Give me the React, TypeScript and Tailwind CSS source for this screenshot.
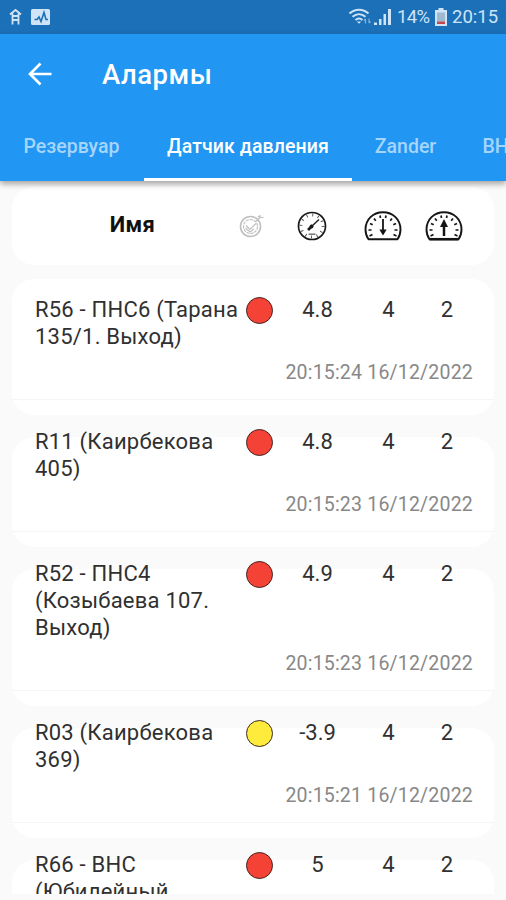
import React from 'react';
import clsx from 'clsx';

type Level = 'alarm' | 'warning';

interface Alarm {
    name: string[];
    level: Level;
    value: string;
    min: string;
    max: string;
    time: string;
}

const alarms: Alarm[] = [
    { name: ['R56 - ПНС6 (Тарана', '135/1. Выход)'], level: 'alarm', value: '4.8', min: '4', max: '2', time: '20:15:24 16/12/2022' },
    { name: ['R11 (Каирбекова', '405)'], level: 'alarm', value: '4.8', min: '4', max: '2', time: '20:15:23 16/12/2022' },
    { name: ['R52 - ПНС4', '(Козыбаева 107.', 'Выход)'], level: 'alarm', value: '4.9', min: '4', max: '2', time: '20:15:23 16/12/2022' },
    { name: ['R03 (Каирбекова', '369)'], level: 'warning', value: '-3.9', min: '4', max: '2', time: '20:15:21 16/12/2022' },
    { name: ['R66 - ВНС', '(Юбилейный'], level: 'alarm', value: '5', min: '4', max: '2', time: '' },
];

const StatusBar: React.FC = () => (
    <div className="flex h-[34px] shrink-0 items-center bg-[#1b70b7] pl-[9px] pr-[7px] text-[#cfe4f7]">
        <svg width="13" height="18" viewBox="0 0 13 18" fill="none" stroke="currentColor" strokeWidth="1.8">
            <path d="M1 6.500 6.500 2 12 6.500M3.500 5.500V16.500M9.500 5.500V16.500M3.500 8H9.500M3.500 12H9.500" />
        </svg>
        <svg className="ml-[9px]" width="19" height="16" viewBox="0 0 19 16">
            <rect width="19" height="16" rx="1.5" fill="currentColor" />
            <path d="M3.5 10.5H6L8 8 10 12.5 13 3.5 15 10.5H17" fill="none" stroke="#1b70b7" strokeWidth="1.6" />
        </svg>
        <svg className="ml-auto" width="23" height="18" viewBox="0 0 23 18" fill="none" stroke="currentColor" strokeWidth="2">
            <path d="M.5 5.5C6 .4 14 .4 19.5 5.5M3.5 8.8C7.500 5.300 12.500 5.300 16.500 8.800M6.500 12C8.700 10.100 11.300 10.100 13.500 12" />
            <path d="M7.800 13.500h4.400L10 15.700z" fill="currentColor" stroke="none" />
            <path d="M16.500 15.500V11M15 12.500l1.500-1.500M20 10.500V15M20 15l1.500-1.500" strokeWidth="1.100" opacity=".6" />
        </svg>
        <svg className="ml-[2px]" width="18" height="18" viewBox="0 0 18 18" fill="currentColor">
            <path d="M0 17v-2.500h3V17zM5 17v-6h2.500v6zM9.500 17V6H12v11zM14 17V1h3v16z" />
        </svg>
        <span className="ml-[5px] w-[33px] whitespace-nowrap text-[18.500px] leading-none tracking-[-0.700px]">14%</span>
        <svg className="ml-[5px]" width="12" height="18" viewBox="0 0 12 18">
            <path d="M3.500 0h5v2H12v16H0V2h3.500z" fill="currentColor" />
            <path d="M2 4.500h8v9H2z" fill="#9fb9d0" />
            <path d="M2 13.500h8V16H2z" fill="#c4474e" />
        </svg>
        <span className="ml-[5px] w-[47px] whitespace-nowrap text-[18.500px] leading-none">20:15</span>
    </div>
);

interface TabProps {
    label: string;
    active?: boolean;
    className: string;
}

const Tab: React.FC<TabProps> = ({ label, active, className }) => (
    <div
        className={clsx(
            'flex h-full shrink-0 items-center justify-center whitespace-nowrap border-b-[3px] pt-[2px] text-[19.500px] font-medium',
            active ? 'border-white text-white' : 'border-transparent text-[#a6d5fb]',
            className,
        )}
    >
        {label}
    </div>
);

// Faded target with a check mark and an arrow
const TargetIcon: React.FC = () => (
    <svg width="26" height="26" viewBox="0 0 26 26" fill="none" stroke="#c0c0c0" strokeWidth="1.200">
        <circle cx="11.500" cy="13.500" r="10" strokeWidth="1.600" />
        <circle cx="11.500" cy="13.500" r="7" strokeDasharray="3 1" />
        <path d="M7 12.500l4 4 6-6M6.500 15l4.500 4 4-3" />
        <path d="M17 8.500l4-4V2M21 4.500h3.500M19 3l2 1.500" />
    </svg>
);

const GaugeIcon: React.FC = () => (
    <svg width="30" height="30" viewBox="0 0 30 30" fill="none" stroke="#191919">
        <circle cx="15" cy="15" r="13.500" strokeWidth="1.700" />
        <circle cx="15" cy="15" r="11" strokeWidth="2.800" strokeDasharray=".900 4.860" opacity=".8" />
        <path d="M14 16 22 8.500" strokeWidth="1.400" />
        <path d="M11 19l4.500-4.500" strokeWidth="2.600" />
        <circle cx="14.500" cy="15.500" r="1.900" fill="#191919" stroke="none" />
        <path d="M11.500 23.200h7" strokeWidth="1.500" stroke="#777" />
    </svg>
);

const LimitIcon: React.FC<{ direction: 'up' | 'down' }> = ({ direction }) => (
    <svg width="38" height="30" viewBox="0 0 38 30" fill="none" stroke="#151515">
        <path
            d="M4.500 28.200C2.500 25.500 1.500 22.500 1.500 18.500 1.500 8.500 9 1.300 19 1.300S36.500 8.500 36.500 18.500C36.500 22.500 35.500 25.500 33.500 28.200Z"
            strokeWidth="1.900"
            strokeLinejoin="round"
        />
        <path
            d="M4.500 19h3M6 12.500l2.700 1.300M10 7.500l1.800 2.200M16 4.500l.5 2.500M22 4.500l-.5 2.500M28 7.500l-1.800 2.200M32 12.500l-2.700 1.300M33.500 19h-3M5.500 25l3-1.500M32.500 25l-3-1.500"
            strokeWidth="1.700"
        />
        {direction === 'down' ? (
            <>
                <path d="M19 8v12" strokeWidth="1.800" />
                <path d="M15.300 18.500h7.400L19 24.500z" fill="#151515" stroke="none" />
            </>
        ) : (
            <>
                <path d="M19 25V14" strokeWidth="2.500" />
                <path d="M15 16h8l-4-8z" fill="#151515" stroke="none" />
                <path d="M4.500 28.200h29" strokeWidth="2.500" />
            </>
        )}
    </svg>
);

const AlarmCard: React.FC<{ alarm: Alarm; first: boolean }> = ({ alarm, first }) => (
    <div className={clsx('flex flex-col rounded-[22px] bg-white', first ? 'mt-[14px] pt-[17px]' : 'mt-[22px]')}>
        <div className={clsx('border-b border-[#f5f5f5] pb-[15px]', !first && '-mt-[9px]')}>
            <div className="flex pl-[23px] text-[22px] leading-[27px] text-[#303030]">
                <div className="w-[210px] shrink-0 whitespace-nowrap tracking-[0.220px]">
                    {alarm.name.map(line => (
                        <div key={line}>{line}</div>
                    ))}
                </div>
                <div
                    className={clsx(
                        'mt-[1px] ml-[1px] size-[27px] shrink-0 rounded-full border-[1.500px] border-[#3b2825]',
                        alarm.level === 'alarm' ? 'bg-[#f44336]' : 'bg-[#ffeb3b]',
                    )}
                />
                <div className="w-[89px] shrink-0 text-center">{alarm.value}</div>
                <div className="w-[53px] shrink-0 text-center">{alarm.min}</div>
                <div className="w-[64px] shrink-0 text-center">{alarm.max}</div>
            </div>
            <div className="mt-[10px] h-[24px] pr-[21px] text-right text-[19.500px] leading-[25px] tracking-[0.200px] text-[#888]">
                {alarm.time}
            </div>
        </div>
        <div className="h-[15px]" />
    </div>
);

const App: React.FC = () => {
    return (
        <div className="flex h-[900px] w-[506px] flex-col overflow-hidden bg-[#fafafa] font-['Roboto','Noto_Sans',sans-serif]">
            <StatusBar />
            <header className="relative z-10 flex h-[147px] shrink-0 flex-col bg-[#2196f3] shadow-[0_3px_6px_rgba(0,0,0,0.35)]">
                <div className="flex h-[79px] items-center pl-[28px] text-white">
                    <svg width="24" height="24" viewBox="0 0 24 24" fill="none" stroke="currentColor" strokeWidth="2.700">
                        <path d="M23.500 12H2.500M12.500 1.500 2 12l10.500 10.500" />
                    </svg>
                    <h1 className="ml-[50px] pt-[3px] text-[27.500px] font-medium tracking-[0.500px]">Алармы</h1>
                </div>
                <nav className="flex h-[68px] overflow-hidden">
                    <Tab label="Резервуар" className="w-[143px]" />
                    <Tab label="Датчик давления" active className="ml-[1px] w-[208px] tracking-[0.100px]" />
                    <Tab label="Zander" className="w-[107px]" />
                    <Tab label="ВНС" className="w-[86px]" />
                </nav>
            </header>
            <main className="mb-[6px] min-h-0 flex-1 overflow-hidden px-[12px]">
                <div className="mt-[6px] flex h-[78px] items-center rounded-[22px] bg-white">
                    <div className="w-[227px] pb-[3px] pl-[14px] text-center text-[22px] font-bold tracking-[0.300px] text-[#111]">Имя</div>
                    <TargetIcon />
                    <div className="ml-[32px]"><GaugeIcon /></div>
                    <div className="ml-[37px]"><LimitIcon direction="down" /></div>
                    <div className="ml-[23px]"><LimitIcon direction="up" /></div>
                </div>
                {alarms.map((alarm, i) => (
                    <AlarmCard key={alarm.name[0]} alarm={alarm} first={i === 0} />
                ))}
            </main>
        </div>
    );
};

export default App;
